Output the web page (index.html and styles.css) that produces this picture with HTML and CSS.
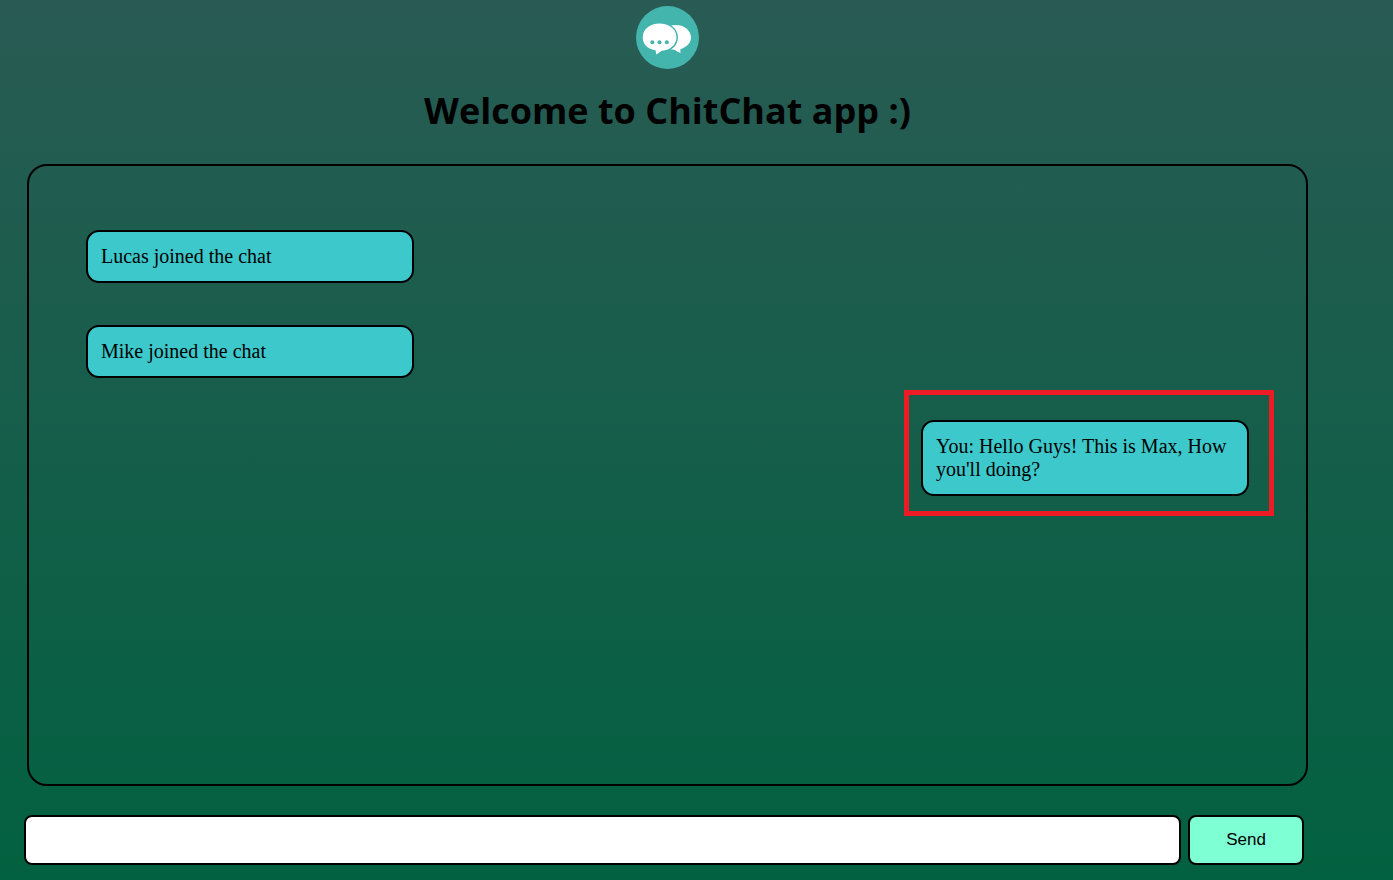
FILE: index.html
```html
<!DOCTYPE html>
<html lang="en">
<head>
<meta charset="utf-8">
<meta name="viewport" content="width=device-width, initial-scale=1">
<title>ChitChat app</title>
<link rel="stylesheet" href="styles.css">
</head>
<body>
<header class="header">
  <svg class="logo" viewBox="0 0 63 63" aria-hidden="true">
    <circle cx="31.5" cy="31.5" r="31.5" fill="#43b5ad"/>
    <path d="M34 19.800C46 16.500 55 23.500 55 31.500C55 36.500 51.500 40.500 44.300 43.200L44.500 47C42 46 40 44.700 38.500 43.700L32 43Z" fill="#fff"/>
    <path d="M23.500 16.800C33.500 16.800 41.200 23.200 41.200 31.200C41.200 39.200 34.500 45 26 45.500L19.700 49.800L19 45C11 43.200 6 38 6 31.200C6 23.200 13.500 16.800 23.500 16.800Z" fill="#fff" stroke="#43b5ad" stroke-width="1.500"/>
    <g fill="#43b5ad"><circle cx="16.300" cy="36.200" r="2"/><circle cx="23.500" cy="36.200" r="2"/><circle cx="30.800" cy="36.200" r="2"/></g>
  </svg>
  <h1 class="title">Welcome to ChitChat app :)</h1>
</header>
<main class="chat">
  <p class="message">Lucas joined the chat</p>
  <p class="message">Mike joined the chat</p>
  <p class="message own highlighted">You: Hello Guys! This is Max, How you'll doing?</p>
</main>
<form class="composer">
  <input class="text-box" type="text" aria-label="Message">
  <button class="send" type="button">Send</button>
</form>
</body>
</html>
```
FILE: styles.css
```css
* {
  box-sizing: border-box;
}

body {
  min-height: 100vh;
  margin: 0;
  padding: 6px 85px 15px 27px;
  display: flex;
  flex-direction: column;
  background: linear-gradient(rgb(41, 91, 84), rgb(2, 97, 64));
  color: #000;
}

.header {
  display: flex;
  flex-direction: column;
  align-items: center;
}

.logo {
  width: 63px;
  height: 63px;
}

.title {
  margin: 17px 0 28px;
  font: bold 36px/50px "Open Sans", sans-serif;
}

.chat {
  flex: 1;
  display: flex;
  flex-direction: column;
  align-items: flex-start;
  gap: 42px;
  padding: 64px 57px;
  border: 2px solid #000;
  border-radius: 20px;
}

.message {
  position: relative;
  width: 328px;
  margin: 0;
  padding: 13px;
  border: 2px solid #000;
  border-radius: 13px;
  background: rgb(61, 201, 204);
  font: 20px/23px "Liberation Serif", serif;
}

.own {
  align-self: flex-end;
}

.highlighted::after {
  content: "";
  position: absolute;
  inset: -32px -27px -22px -19px;
  border: 5px solid #ed1c24;
}

.composer {
  display: flex;
  gap: 7px;
  margin: 29px 4px 0 -3px;
}

.text-box,
.send {
  height: 50px;
  border: 2px solid #000;
  border-radius: 8px;
  font: 17px "Liberation Sans", sans-serif;
  color: #000;
}

.text-box {
  flex: 1;
  min-width: 0;
  padding: 0 12px;
  background: #fff;
}

.send {
  width: 116px;
  background: aquamarine;
}
```
